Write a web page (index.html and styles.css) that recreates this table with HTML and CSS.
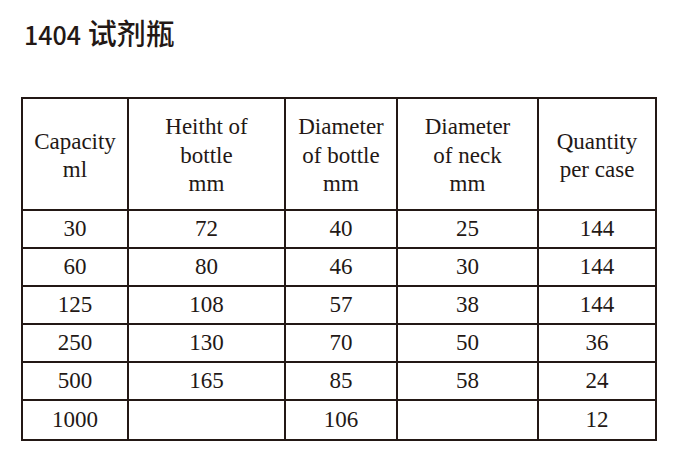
FILE: index.html
```html
<!DOCTYPE html>
<html lang="en">
<head>
<meta charset="utf-8">
<title>1404 reagent bottle</title>
<link rel="stylesheet" href="styles.css">
</head>
<body>
<div class="page">
  <h1 class="title"><span class="num">1404</span> <span class="cn" lang="zh-CN">试剂瓶</span></h1>
  <div class="spec">
    <div class="cell head">Capacity<br>ml</div>
    <div class="cell head">Heitht of<br>bottle<br>mm</div>
    <div class="cell head">Diameter<br>of bottle<br>mm</div>
    <div class="cell head">Diameter<br>of neck<br>mm</div>
    <div class="cell head end">Quantity<br>per case</div>

    <div class="cell">30</div><div class="cell">72</div><div class="cell">40</div><div class="cell">25</div><div class="cell end">144</div>
    <div class="cell">60</div><div class="cell">80</div><div class="cell">46</div><div class="cell">30</div><div class="cell end">144</div>
    <div class="cell">125</div><div class="cell">108</div><div class="cell">57</div><div class="cell">38</div><div class="cell end">144</div>
    <div class="cell">250</div><div class="cell">130</div><div class="cell">70</div><div class="cell">50</div><div class="cell end">36</div>
    <div class="cell">500</div><div class="cell">165</div><div class="cell">85</div><div class="cell">58</div><div class="cell end">24</div>
    <div class="cell last">1000</div><div class="cell last"></div><div class="cell last">106</div><div class="cell last"></div><div class="cell last end">12</div>
  </div>
</div>
</body>
</html>
```

FILE: styles.css
```css
html, body {
  margin: 0;
  padding: 0;
  background: #ffffff;
}

.page {
  padding: 13px 0 0 21px;
  color: #231815;
}

.title {
  margin: 0 0 46px 3px;
  font-family: "Noto Sans CJK SC", sans-serif;
  font-weight: 500;
  font-size: 25px;
  line-height: 38px;
  height: 38px;
  color: #231815;
}

.title .cn {
  font-size: 29px;
  margin-left: 1px;
}

.spec {
  display: grid;
  grid-template-columns: 106px 157px 112px 141px 116px;
  grid-template-rows: 112px repeat(5, 38px) 38px;
  width: 632px;
  border: 2px solid #231815;
  font-family: "Liberation Serif", serif;
  font-size: 23px;
  color: #231815;
}

.cell {
  box-sizing: border-box;
  display: flex;
  flex-direction: column;
  align-items: center;
  justify-content: center;
  text-align: center;
  border-right: 2px solid #231815;
  border-bottom: 2px solid #231815;
  line-height: 36px;
}

.cell.head {
  line-height: 28.5px;
  padding-top: 4px;
}

.cell.end {
  border-right: none;
}

.cell.last {
  border-bottom: none;
}
```
